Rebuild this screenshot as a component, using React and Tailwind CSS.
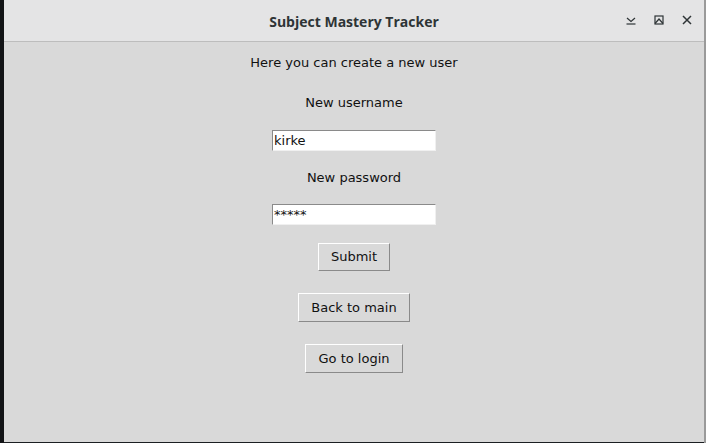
import React from "react";

export default function App() {
  const body = { fontFamily: '"DejaVu Sans", sans-serif' };
  return (
    <div className="w-[706px] h-[443px] bg-[#1c1f22] flex overflow-hidden">
      <div className="w-[4px] h-full bg-[#121416]" />
      <div className="w-[700px] h-[442px] flex flex-col bg-[#d9d9d9]">
        <div className="h-[42px] shrink-0 bg-[#e4e4e5] border-b border-[#bdbdbd] relative flex items-center justify-center">
          <span
            className="text-[14px] font-bold text-[#2e3436] pt-[1px]"
            style={{ fontFamily: '"Open Sans", sans-serif' }}
          >
            Subject Mastery Tracker
          </span>
          <div className="absolute right-[11px] top-0 h-full flex items-center gap-[16px] pb-[1px]">
            <svg width="12" height="12" viewBox="0 0 12 12" fill="none" stroke="#2e3436" strokeWidth="1.2">
              <path d="M2 4 L6 7.5 L10 4" />
              <path d="M1.5 10 H10.5" />
            </svg>
            <svg width="12" height="12" viewBox="0 0 12 12" fill="none" stroke="#2e3436" strokeWidth="1.2">
              <rect x="2" y="2" width="8" height="8" />
              <path d="M2 9.5 L6 5 L10 9.5" />
            </svg>
            <svg width="12" height="12" viewBox="0 0 12 12" fill="none" stroke="#2e3436" strokeWidth="1.5">
              <path d="M2 2 L10 10 M10 2 L2 10" />
            </svg>
          </div>
        </div>
        <div className="flex-1 flex flex-col items-center text-[13px] text-[#111111]" style={body}>
          <div className="mt-[11px] h-[20px] leading-[20px]">Here you can create a new user</div>
          <div className="mt-[20px] h-[20px] leading-[20px]">New username</div>
          <div className="mt-[17px] w-[164px] h-[21px] bg-white border border-t-[#8a8a8a] border-l-[#8a8a8a] border-b-[#f0f0f0] border-r-[#f0f0f0] pl-[1px] leading-[19px]">
            kirke
          </div>
          <div className="mt-[17px] h-[20px] leading-[20px]">New password</div>
          <div className="mt-[16px] w-[164px] h-[21px] bg-white border border-t-[#8a8a8a] border-l-[#8a8a8a] border-b-[#f0f0f0] border-r-[#f0f0f0] pl-[1px] leading-[19px]">
            *****
          </div>
          <button className="mt-[18px] w-[72px] h-[28px] bg-[#d9d9d9] border border-t-white border-l-white border-b-[#8a8a8a] border-r-[#8a8a8a] leading-[26px]">
            Submit
          </button>
          <button className="mt-[22px] w-[112px] h-[29px] bg-[#d9d9d9] border border-t-white border-l-white border-b-[#8a8a8a] border-r-[#8a8a8a] leading-[27px]">
            Back to main
          </button>
          <button className="mt-[22px] w-[98px] h-[29px] bg-[#d9d9d9] border border-t-white border-l-white border-b-[#8a8a8a] border-r-[#8a8a8a] leading-[27px]">
            Go to login
          </button>
        </div>
      </div>
      <div className="w-[2px] h-full bg-[#9a9a9a]" />
    </div>
  );
}
